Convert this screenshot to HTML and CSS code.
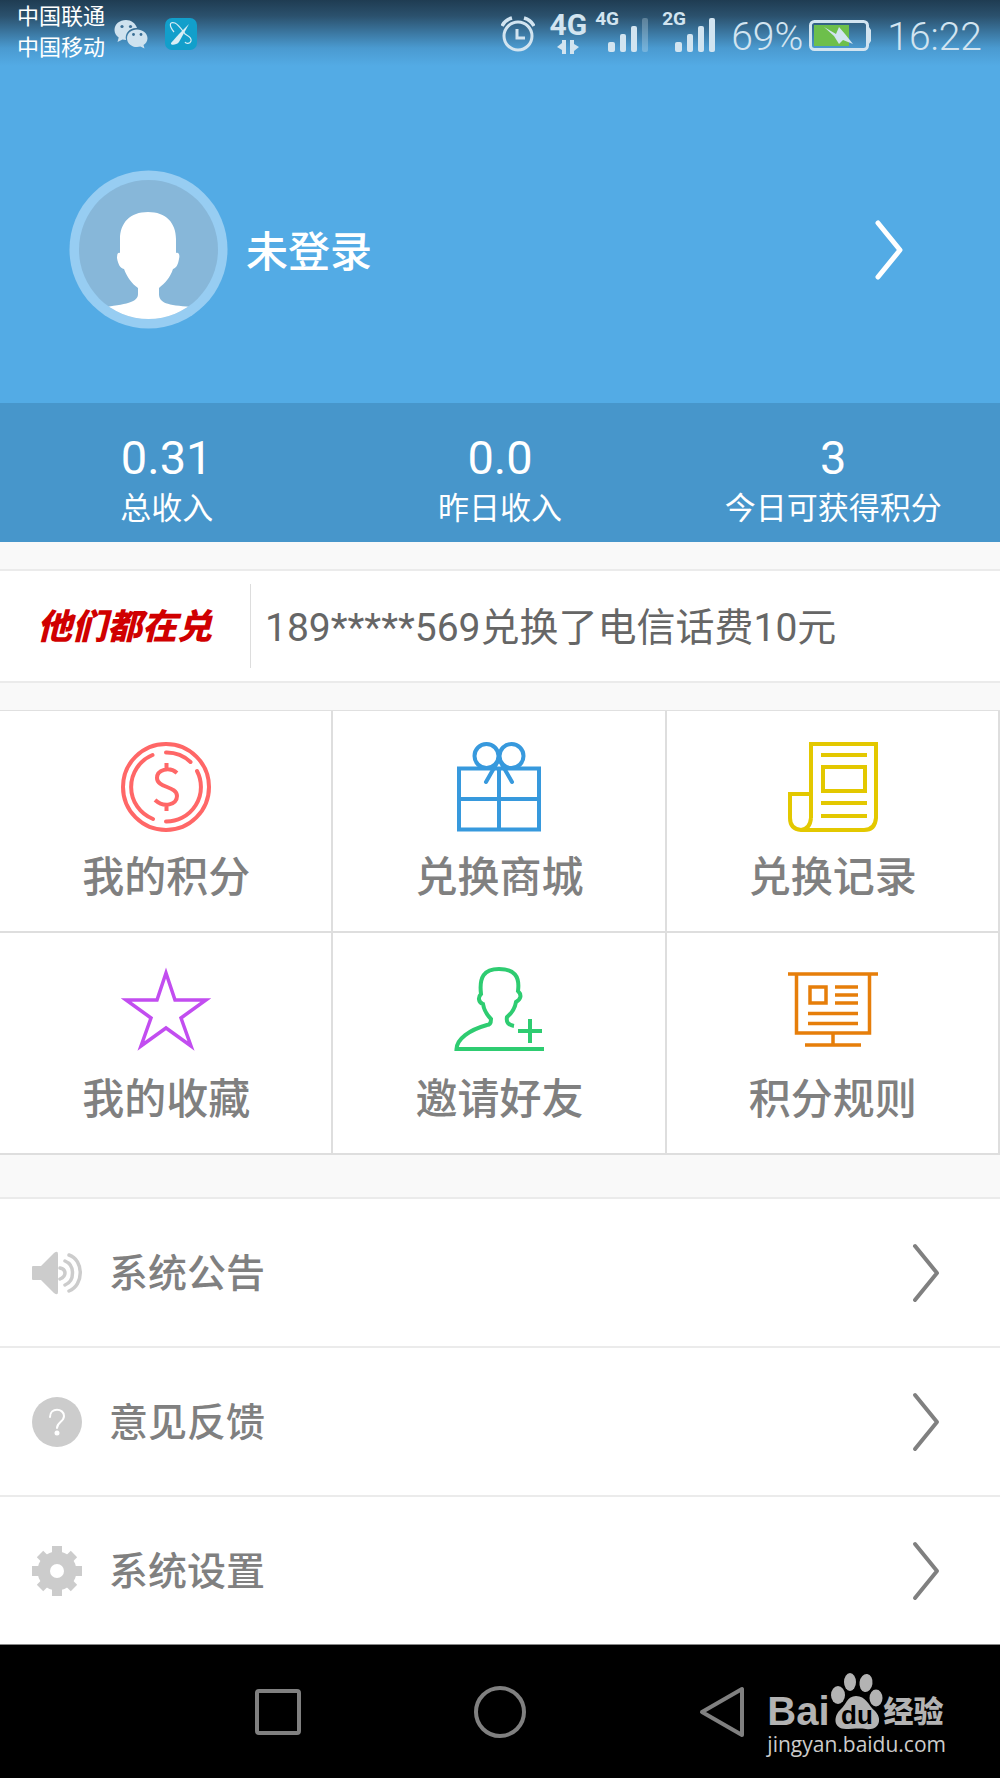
FILE: index.html
```html
<!DOCTYPE html>
<html lang="zh-CN">
<head>
<meta charset="utf-8">
<meta name="viewport" content="width=device-width, initial-scale=1">
<title>我的</title>
<link rel="stylesheet" href="styles.css">
</head>
<body>
<header class="hero">
  <div class="status">
    <div class="status-left">
      <div class="carriers"><span>中国联通</span><span>中国移动</span></div>
      <svg class="wechat" width="34" height="30" viewBox="0 0 34 30" aria-hidden="true">
        <path fill="#cfe2ef" d="M12 1C5.500 1 .5 5.200.5 11c0 3.200 1.600 5.800 4.200 7.600L3.500 23l5-2.400c1.300.3 2.500.5 3.500.4C10.500 14 16 8.500 23 9 21.500 4 17 1 12 1z"/>
        <path fill="#cfe2ef" d="M23 10.500c-5.600 0-10 3.700-10 8.700s4.400 8.800 10 8.800c1.200 0 2.300-.2 3.400-.5l4.100 2-1-3.400c2.400-1.600 4-4 4-6.900 0-5-4.900-8.700-10.500-8.700z"/>
        <g fill="#3b6f95"><circle cx="8" cy="7.500" r="1.600"/><circle cx="16.500" cy="7.500" r="1.600"/><circle cx="19.500" cy="15.500" r="1.400"/><circle cx="27" cy="15.500" r="1.400"/></g>
      </svg>
      <svg class="app" width="32" height="32" viewBox="0 0 32 32" aria-hidden="true">
        <rect width="32" height="32" rx="7" fill="#129fcb"/>
        <path fill="none" stroke="#d8eef5" stroke-width="1.200" d="M9 14C4 8 4 3 10 5c4 2 7 7 10 11 3 2 7 3 6 7-1 3-5 3-6 1"/>
        <path fill="#d8eef5" d="M24 6L14 24c-2 3-9 4-8 1L14 16z"/>
      </svg>
    </div>
    <div class="status-right">
      <svg width="34" height="36" viewBox="0 0 34 36" fill="none" stroke="#d2e4f0" aria-hidden="true">
        <circle cx="17" cy="20" r="14" stroke-width="3"/><path stroke-width="3" d="M16 13v9h8"/><path stroke-width="3.500" d="M1 10Q4 4 11 2M33 10Q30 4 23 2"/>
      </svg>
      <div class="net">
        <span>4G</span>
        <svg width="22" height="14" viewBox="0 0 22 14" fill="#d2e4f0" aria-hidden="true"><path d="M9 0v14H5V10L0 7l5-4V0zM13 0h4v4l5 3-5 4v3h-4z"/></svg>
      </div>
      <div class="signal">
        <span>4G</span>
        <svg width="41" height="34" viewBox="0 0 41 34" fill="#d2e4f0" aria-hidden="true"><rect y="24" width="7" height="10" rx="2"/><rect x="12" y="16" width="6" height="18" rx="2"/><rect x="23" y="8" width="6" height="26" rx="2"/><rect x="34" width="6" height="34" rx="2" opacity=".3"/></svg>
      </div>
      <div class="signal">
        <span>2G</span>
        <svg width="41" height="34" viewBox="0 0 41 34" fill="#d2e4f0" aria-hidden="true"><rect y="24" width="7" height="10" rx="2"/><rect x="12" y="16" width="6" height="18" rx="2"/><rect x="23" y="8" width="6" height="26" rx="2"/><rect x="34" width="6" height="34" rx="2"/></svg>
      </div>
      <span class="percent">69%</span>
      <svg class="battery" width="62" height="31" viewBox="0 0 62 31" aria-hidden="true">
        <rect x="1.500" y="1.500" width="57" height="28" rx="4" fill="none" stroke="#d2e4f0" stroke-width="3"/>
        <path fill="#d2e4f0" d="M58 7h2l2 3v11l-2 3h-2z"/><rect x="5" y="5" width="35" height="21" fill="#6dbf4b"/>
        <path fill="#d2e4f0" d="M15 7l12 7 3-7 6 7 8 10-10-4-4 4-5-8z"/>
      </svg>
      <time class="clock">16:22</time>
    </div>
  </div>
  <a class="profile" href="#login">
    <svg class="avatar" width="159" height="159" viewBox="0 0 159 159" aria-hidden="true">
      <circle cx="79.500" cy="79.500" r="79" fill="#97cdf2"/>
      <clipPath id="face"><circle cx="79.500" cy="79.500" r="69.500"/></clipPath>
      <g clip-path="url(#face)">
        <rect width="159" height="159" fill="#87b7d9"/>
        <path fill="#fff" d="M79 42c18 0 28 11 28 27v14c3-1 4 2 3 6-1 6-3 9-6 10-3 9-8 14-14 19v6c0 9 8 11 32 13v25H36v-25c25-3 33-6 33-13v-6c-6-4-11-11-14-19-4-1-6-5-7-11 0-4 1-6 3-5V69c0-16 10-27 28-27z"/>
      </g>
    </svg>
    <span class="name">未登录</span>
    <svg class="chevron" width="28" height="60" viewBox="0 0 28 60" aria-hidden="true"><path d="M3 3l22 27L3 57"/></svg>
  </a>
  <dl class="stats">
    <div><dd>0.31</dd><dt>总收入</dt></div>
    <div><dd>0.0</dd><dt>昨日收入</dt></div>
    <div><dd>3</dd><dt>今日可获得积分</dt></div>
  </dl>
</header>

<main>
  <section class="notice">
    <strong>他们都在兑</strong>
    <p>189*****569兑换了电信话费10元</p>
  </section>

  <nav class="tiles">
    <a href="#points">
      <svg width="90" height="90" viewBox="0 0 90 90" stroke="#ff6767" stroke-width="4" aria-hidden="true">
        <circle cx="45" cy="45" r="43"/>
        <g stroke-linecap="round"><path d="M45 10.500A34.500 34.500 0 0 1 69.500 20M76 29A34.500 34.500 0 0 1 45 79.500M31.500 13A34.500 34.500 0 0 0 32 77"/></g>
        <path d="M45.500 21v7M45.500 61v8M56 31c-8-7-20-3-20 5 0 10 20 8 20 18 0 9-13 12-22 4"/>
      </svg>
      <span>我的积分</span>
    </a>
    <a href="#mall">
      <svg width="90" height="90" viewBox="0 0 90 90" stroke="#3799dd" stroke-width="4" aria-hidden="true">
        <path d="M5 26.500h80v61H5zM5 57h80M45 26v61"/><circle cx="32.500" cy="14" r="12"/><circle cx="57.500" cy="14" r="12"/><path stroke-linecap="round" d="M44 19L32 40M46 19l12 21"/>
      </svg>
      <span>兑换商城</span>
    </a>
    <a href="#history">
      <svg width="90" height="90" viewBox="0 0 90 90" stroke="#e3c800" stroke-width="4" aria-hidden="true">
        <path d="M23 76V2h65v74q-1 12-12 12H13Q2 87 2 76V52h21M23 76q-1 11-10 12M33 13h46M33 61h46M33 74h46M35 25h42v24H35z"/>
      </svg>
      <span>兑换记录</span>
    </a>
    <a href="#favorites">
      <svg width="90" height="90" viewBox="0 0 90 90" stroke="#c24df0" stroke-width="3.500" aria-hidden="true">
        <path d="M45 9l9 27h31L60 54l10 28-25-18-25 18 10-28L5 36h31z"/>
      </svg>
      <span>我的收藏</span>
    </a>
    <a href="#invite">
      <svg width="90" height="90" viewBox="0 0 90 90" stroke="#2ecc71" stroke-width="4" aria-hidden="true">
        <path d="M60 62c-6-1-8-4-7-9 5-4 8-9 9-15 5-3 6-7 2-11C66 12 60 5 45 5S25 13 27 30c-3 3-3 8 2 10 1 6 4 11 8 15 0 3-1 6-4 6C15 66 3 75 2.500 85H90M76 55v24M64 67h24"/>
      </svg>
      <span>邀请好友</span>
    </a>
    <a href="#rules">
      <svg width="90" height="90" viewBox="0 0 90 90" stroke="#e67e0a" stroke-width="3.500" aria-hidden="true">
        <path d="M0 10h90M8.500 10v59h73V10M45 69v12M17 81h56M22 23h16v16H22zM47 23h23M47 31h23M47 39h23M20 49.500h50M20 59.500h50"/>
      </svg>
      <span>积分规则</span>
    </a>
  </nav>

  <nav class="list">
    <a href="#news">
      <svg class="icon" width="50" height="50" viewBox="0 0 50 50" aria-hidden="true">
        <path fill="#ccc" d="M1 18h8L22 5q4-3 4 1v38q0 4-4 1L9 32H1q-1 0-1-1V19q0-1 1-1z"/>
        <path fill="none" stroke="#ccc" stroke-width="3.500" stroke-linecap="round" d="M28 20q5 1 5 5t-5 6M33 13c10 4 10 20 0 24M37 7c15 5 15 30 0 36"/>
      </svg>
      <span>系统公告</span>
      <svg class="chevron" width="28" height="60" viewBox="0 0 28 60" aria-hidden="true"><path d="M3 3l22 27L3 57"/></svg>
    </a>
    <a href="#feedback">
      <svg class="icon" width="50" height="50" viewBox="0 0 50 50" aria-hidden="true">
        <circle cx="25" cy="25" r="25" fill="#ccc"/><path fill="none" stroke="#fff" stroke-width="2" stroke-linecap="round" d="M18 20c0-10 14-9 14-1 0 6-7 6-7 12"/><circle cx="25" cy="36" r="2.500" fill="#fff"/>
      </svg>
      <span>意见反馈</span>
      <svg class="chevron" width="28" height="60" viewBox="0 0 28 60" aria-hidden="true"><path d="M3 3l22 27L3 57"/></svg>
    </a>
    <a href="#settings">
      <svg class="icon" width="50" height="50" viewBox="0 0 50 50" aria-hidden="true">
        <g fill="#ccc"><rect x="20" width="10" height="50"/><rect y="20" width="50" height="10"/><g transform="rotate(45 25 25)"><rect x="20.500" y="1" width="9" height="48"/><rect x="1" y="20.500" width="48" height="9"/></g><circle cx="25" cy="25" r="19.500"/></g><circle cx="25" cy="25" r="7" fill="#fff"/>
      </svg>
      <span>系统设置</span>
      <svg class="chevron" width="28" height="60" viewBox="0 0 28 60" aria-hidden="true"><path d="M3 3l22 27L3 57"/></svg>
    </a>
  </nav>
</main>

<footer class="system">
  <button type="button" aria-label="最近任务"><svg width="52" height="52" viewBox="0 0 52 52"><rect x="5" y="5" width="42" height="42" rx="2"/></svg></button>
  <button type="button" aria-label="主屏幕"><svg width="52" height="52" viewBox="0 0 52 52"><circle cx="26" cy="26" r="24"/></svg></button>
  <button type="button" aria-label="返回"><svg width="52" height="52" viewBox="0 0 52 52"><path stroke-linejoin="round" d="M6 26L46 3v46z"/></svg></button>
  <div class="brand">
    <div class="brand-row">
      <span class="bai">Bai</span>
      <svg width="54" height="58" viewBox="0 0 54 58" aria-hidden="true">
        <g fill="#b3b3b3"><ellipse cx="8" cy="22" rx="7" ry="9"/><ellipse cx="20" cy="9" rx="6" ry="9"/><ellipse cx="36" cy="10" rx="6.500" ry="9" transform="rotate(8 36 10)"/><ellipse cx="46" cy="25" rx="6.500" ry="8.500"/><path d="M26 23c-9 0-10 9-15 13-8 7-8 20 5 20 5 0 14-1 20 0 13 2 17-10 9-18-7-6-9-15-19-15z"/></g>
        <text x="27" y="51" text-anchor="middle" class="du">du</text>
      </svg>
      <span class="jy">经验</span>
    </div>
    <span class="url">jingyan.baidu.com</span>
  </div>
</footer>
</body>
</html>
```
FILE: styles.css
```css
* { box-sizing: border-box; }

body {
  margin: 0;
  background: #f9f9f9;
  color: #808080;
  font-family: Roboto, "Noto Sans CJK SC", sans-serif;
}

a { color: inherit; text-decoration: none; }
svg { display: block; flex: none; }

/* Header */
.hero {
  background: linear-gradient(#1f3c52 0, #2b516d 16px, #4a9ad0 48px, #53abe5 66px);
  color: #fff;
}

.status {
  display: flex;
  justify-content: space-between;
  height: 64px;
  padding: 0 18px 0 17px;
}
.status-left, .status-right { display: flex; }
.carriers {
  display: flex;
  flex-direction: column;
  padding-top: 1px;
  font-size: 22px;
  line-height: 31px;
}
.wechat { margin: 19px 0 0 9px; }
.app { margin: 18px 0 0 17px; }
.status-right { color: #d2e4f0; }
.status-right > svg { margin-top: 16px; }
.net {
  display: flex;
  flex-direction: column;
  align-items: center;
  margin-left: 14px;
  padding-top: 10px;
  font-size: 30px;
  font-weight: 700;
  line-height: 30px;
}
.signal {
  display: flex;
  margin-left: 13px;
}
.net + .signal { margin-left: 8px; }
/* The network label overhangs the signal bars. */
.signal span {
  width: 13px;
  margin-top: 8px;
  font-size: 19px;
  font-weight: 700;
  line-height: 22px;
  white-space: nowrap;
}
.signal svg { margin-top: 18px; }
.percent, .clock {
  margin-top: 13px;
  font-size: 39px;
  font-weight: 300;
  line-height: 48px;
}
.percent { margin-left: 15px; }
.status-right .battery { margin: 20px 16px 0 6px; }

.profile {
  display: flex;
  align-items: center;
  gap: 18px;
  height: 339px;
  padding: 32px 97px 0 69px;
}
.name {
  flex: 1;
  padding-top: 6px;
  font-size: 42px;
  font-weight: 500;
  line-height: 60px;
}

.chevron {
  fill: none;
  stroke: #808080;
  stroke-width: 4;
  stroke-linecap: round;
  stroke-linejoin: round;
}
.profile .chevron { stroke: #fff; stroke-width: 5; }

.stats {
  display: grid;
  grid-template-columns: repeat(3, 1fr);
  margin: 0;
  padding: 27px 0 10px;
  background: #4796cb;
  text-align: center;
}
.stats dd { margin: 0; font-size: 47px; line-height: 56px; }
.stats dt { font-size: 31px; line-height: 46px; }

/* Redemption ticker */
.notice {
  display: flex;
  align-items: center;
  height: 114px;
  margin: 27px 0;
  border: solid #ebebeb;
  border-width: 2px 0;
  background: #fff;
}
.notice strong {
  flex: none;
  width: 250px;
  padding: 4px 0 0 37px;
  color: #d00000;
  font-size: 35px;
  font-style: italic;
  font-weight: 900;
  line-height: 80px;
}
.notice p {
  flex: 1;
  margin: 0;
  padding: 4px 0 0 14px;
  border-left: 1px solid #ddd;
  color: #666;
  font-size: 39px;
  line-height: 80px;
}

/* Tile grid */
.tiles {
  display: grid;
  grid-template-columns: repeat(3, 1fr);
  border-top: 1px solid #e0e0e0;
  background: #fff;
}
.tiles a {
  display: flex;
  flex-direction: column;
  align-items: center;
  gap: 16px;
  height: 222px;
  padding: 31px 0 0 1px;
  border: solid #dedede;
  border-width: 0 2px 2px 0;
  font-size: 42px;
  font-weight: 500;
  line-height: 60px;
}
.tiles svg { fill: none; }

/* Menu list */
.list { margin-top: 42px; background: #fff; }
.list a {
  display: flex;
  align-items: center;
  gap: 27px;
  height: 149px;
  padding: 0 60px 0 32px;
  border-top: 2px solid #ebebeb;
  font-size: 39px;
  font-weight: 500;
  line-height: 56px;
}
.list span { flex: 1; padding-top: 2px; }

/* System bar */
.system {
  position: relative;
  display: grid;
  grid-template-columns: 3fr 4fr 4fr 4fr 3fr;
  align-items: center;
  height: 134px;
  border-top: 1px solid #888;
  background: #000;
}
.system button {
  display: grid;
  place-items: center;
  padding: 0;
  border: 0;
  background: none;
}
.system button:first-child { grid-column: 2; }
.system button svg { fill: none; stroke: #808080; stroke-width: 4; }

.brand {
  position: absolute;
  right: 54px;
  bottom: 21px;
  color: #b3b3b3;
}
.brand-row { display: flex; align-items: flex-end; }
.bai {
  font: 700 40px/40px "Liberation Sans", Arial, sans-serif;
}
.jy { font-size: 30px; font-weight: 900; line-height: 38px; }
.du {
  fill: #000;
  font: 700 26px "Liberation Sans", Arial, sans-serif;
}
.url {
  display: block;
  color: #ccc;
  font: 21px/26px "Open Sans", sans-serif;
}
```
